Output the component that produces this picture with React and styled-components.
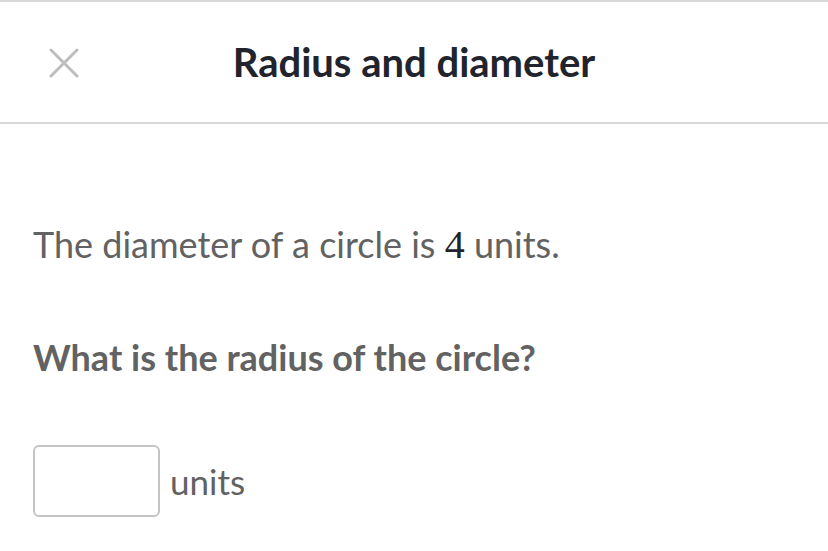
import React from "react";
import styled, { createGlobalStyle } from "styled-components";

const Global = createGlobalStyle`
  html, body { margin: 0; padding: 0; background: #fff; }
  body { font-family: Lato, "Open Sans", sans-serif; }
`;

const Page = styled.div`
  width: 828px;
  height: 551px;
  border-top: 2px solid #d8d8d8;
  box-sizing: border-box;
  overflow: hidden;
`;

const Header = styled.header`
  position: relative;
  height: 120px;
  border-bottom: 2px solid #d8d8d8;
  display: flex;
  align-items: center;
  justify-content: center;
`;

const CloseButton = styled.button`
  position: absolute;
  left: 48px;
  top: 45px;
  width: 32px;
  height: 32px;
  padding: 0;
  border: none;
  background: none;
  display: flex;
  align-items: center;
  justify-content: center;
`;

const Title = styled.h1`
  margin: 0;
  font-size: 40px;
  font-weight: 700;
  color: #21242c;
  letter-spacing: 0;
`;

const Content = styled.main`
  padding: 96px 33px 0;
`;

const Paragraph = styled.p`
  margin: 0;
  font-size: 36px;
  line-height: 48px;
  color: #626262;
  font-weight: ${(p) => (p.$bold ? 700 : 400)};
`;

const MathNum = styled.span`
  font-family: "Liberation Serif", "DejaVu Serif", serif;
  color: #21242c;
  font-size: 40px;
`;

const Question = styled(Paragraph)`
  margin-top: 64px;
`;

const AnswerRow = styled.div`
  margin-top: 64px;
  display: flex;
  align-items: center;
  gap: 10px;
`;

const Input = styled.input`
  width: 127px;
  height: 72px;
  box-sizing: border-box;
  border: 2px solid #c4c4c4;
  border-radius: 6px;
  background: #fff;
  outline: none;
`;

const Unit = styled.span`
  font-size: 35px;
  color: #626262;
`;

export default function App() {
  return (
    <>
      <Global />
      <Page>
        <Header>
          <CloseButton aria-label="Close">
            <svg width="30" height="30" viewBox="0 0 30 30">
              <path d="M2 2 L28 28 M28 2 L2 28" stroke="#bdbdbd" strokeWidth="3" strokeLinecap="round" />
            </svg>
          </CloseButton>
          <Title>Radius and diameter</Title>
        </Header>
        <Content>
          <Paragraph>
            The diameter of a circle is <MathNum>4</MathNum> units.
          </Paragraph>
          <Question $bold>What is the radius of the circle?</Question>
          <AnswerRow>
            <Input type="text" />
            <Unit>units</Unit>
          </AnswerRow>
        </Content>
      </Page>
    </>
  );
}
